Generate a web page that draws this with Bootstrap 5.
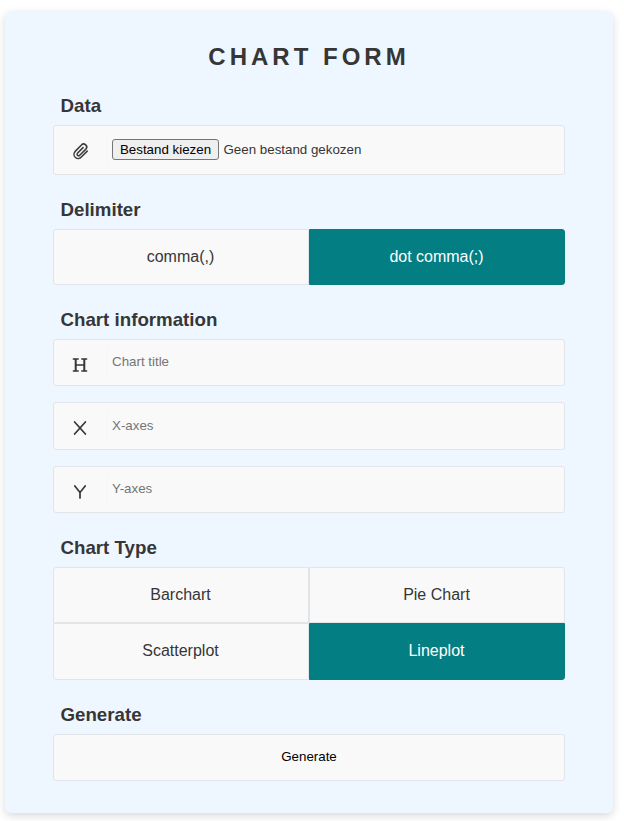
<!DOCTYPE html>
<html lang="nl">
<head>
<meta charset="utf-8">
<meta name="viewport" content="width=device-width, initial-scale=1">
<title>Chart form</title>
<link href="https://cdn.jsdelivr.net/npm/bootstrap@5.3.0/dist/css/bootstrap.min.css" rel="stylesheet">
<style>
body { font-family: "Liberation Sans", Arial, sans-serif; color: #363636; background: #fff; line-height: 1.2; padding: 11px 0 8px 5px; }
.chart-form { width: 608px; height: 802px; padding: 32px 48px 0; background: #eef7ff; border-radius: 6px; box-shadow: 0 3px 8px rgba(0,0,0,.15); }
.form-heading { font-size: 24px; line-height: 28px; letter-spacing: 4px; margin: 0 0 23px; }
.section-title { font-size: 18.72px; line-height: 22px; margin: 0; padding: 1px 0 0 7.5px; height: 31px; }
.box { background: #f9f9f9; border: 1px solid #e1e5e8; border-radius: 3px; }
.box-file { height: 50px; margin-bottom: 23px; }
.box-line { height: 47px; margin-bottom: 16px; }
.box-mid { height: 48px; }
.box-last { margin-bottom: 23px; }
.icon-cell { width: 54px; height: 30px; border-right: 1px solid #f5f5f5; padding: 4px 1px 0 0; }
.box-file .icon-cell { padding-top: 2px; }
.icon-cell svg { display: block; overflow: visible; }
.field-input { font-size: 13.33px; background: transparent; outline: 0; padding: 0 0 2px 4px; height: 100%; }
.field-input::placeholder { color: #757575; opacity: 1; }
.file-btn { font-size: 13.33px; line-height: 15px; color: #000; background: #efefef; border: 1px solid #767676; border-radius: 3px; height: 21px; width: 107px; padding: 2px 0; margin: 0 0 2px 4px; white-space: nowrap; }
.file-name { font-size: 13.33px; margin-left: 4.5px; }
.options { margin-bottom: 23px; }
.option { height: 56px; font-size: 16px; background: #f9f9f9; border: 1px solid #e1e5e8; padding-right: 1px; cursor: pointer; }
.option.chosen { background: #037e82; border-color: #037e82; color: #fff; }
.r-l { border-radius: 3px 0 0 3px; }
.r-r { border-radius: 0 3px 3px 0; }
.r-tl { border-top-left-radius: 3px; }
.r-tr { border-top-right-radius: 3px; }
.r-bl { border-bottom-left-radius: 3px; }
.r-br { border-bottom-right-radius: 3px; }
.tall { height: 57px; padding-bottom: 2px; }
.go { height: 47px; font-size: 13.33px; color: #000; padding: 0 0 1px; }
</style>
</head>
<body>
<form class="chart-form">
  <h1 class="form-heading text-center fw-bold">CHART FORM</h1>

  <h2 class="section-title fw-bold">Data</h2>
  <div class="box box-file d-flex align-items-center">
    <span class="icon-cell d-flex align-items-center justify-content-center">
      <svg width="17" height="17" viewBox="0 0 24 24" fill="none" stroke="#3d3d3d" stroke-width="2.2" stroke-linecap="round"><path d="M21.500 11.500l-8.300 8.300a5.800 5.800 0 0 1-9-7.600l9.100-9.300a4.200 4.200 0 0 1 6.300 5.700l-8.700 8.700a2.100 2.100 0 0 1-3.200-2.800l7.900-7.900"/></svg>
    </span>
    <button type="button" class="file-btn">Bestand kiezen</button>
    <span class="file-name">Geen bestand gekozen</span>
  </div>

  <h2 class="section-title fw-bold">Delimiter</h2>
  <div class="options row g-0">
    <div class="col-6 option r-l d-flex align-items-center justify-content-center">comma(,)</div>
    <div class="col-6 option chosen r-r d-flex align-items-center justify-content-center">dot comma(;)</div>
  </div>

  <h2 class="section-title fw-bold">Chart information</h2>
  <div class="box box-line d-flex align-items-center">
    <span class="icon-cell d-flex align-items-center justify-content-center">
      <svg width="16" height="14" viewBox="0 0 16 14" fill="none" stroke="#363636"><path stroke-width="1.6" d="M.8 1h5.900M9.300 1h5.900M.8 13h5.900M9.300 13h5.900M3.500 7h9"/><path stroke-width="2" d="M3.700 1v12M12.300 1v12"/></svg>
    </span>
    <input class="field-input border-0 flex-grow-1" type="text" placeholder="Chart title">
  </div>
  <div class="box box-line box-mid d-flex align-items-center">
    <span class="icon-cell d-flex align-items-center justify-content-center">
      <svg width="14" height="14" viewBox="0 0 14 14" fill="none" stroke="#363636" stroke-width="1.7" stroke-linecap="round"><path d="M1.600 1 12.400 13M12.400 1 1.600 13"/></svg>
    </span>
    <input class="field-input border-0 flex-grow-1" type="text" placeholder="X-axes">
  </div>
  <div class="box box-line box-last d-flex align-items-center">
    <span class="icon-cell d-flex align-items-center justify-content-center">
      <svg width="14" height="14" viewBox="0 0 14 14" fill="none" stroke="#363636" stroke-width="1.7" stroke-linecap="round"><path d="M1.800 1 7 7.500 12.200 1M7 7.500V13"/></svg>
    </span>
    <input class="field-input border-0 flex-grow-1" type="text" placeholder="Y-axes">
  </div>

  <h2 class="section-title fw-bold">Chart Type</h2>
  <div class="options row g-0">
    <div class="col-6 option r-tl d-flex align-items-center justify-content-center">Barchart</div>
    <div class="col-6 option r-tr d-flex align-items-center justify-content-center">Pie Chart</div>
    <div class="col-6 option tall r-bl d-flex align-items-center justify-content-center">Scatterplot</div>
    <div class="col-6 option tall chosen r-br d-flex align-items-center justify-content-center">Lineplot</div>
  </div>

  <h2 class="section-title fw-bold">Generate</h2>
  <button type="button" class="box go w-100">Generate</button>
</form>
<script src="https://cdn.jsdelivr.net/npm/bootstrap@5.3.0/dist/js/bootstrap.bundle.min.js"></script>
</body>
</html>
